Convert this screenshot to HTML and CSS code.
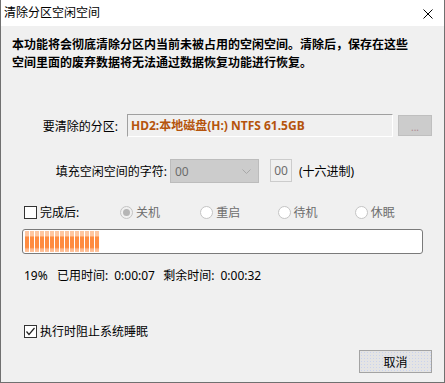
FILE: index.html
```html
<!DOCTYPE html>
<html lang="zh-CN">
<head>
    <meta charset="UTF-8">
    <title>清除分区空闲空间</title>
    <link rel="stylesheet" href="styles.css">
</head>
<body>
    <div class="window">
        <div class="titlebar">
            <span class="title">清除分区空闲空间</span>
            <svg class="close" width="10" height="10" viewBox="0 0 10 10">
                <path d="M0.5 0.5 L9.5 9.5 M9.5 0.5 L0.5 9.5" stroke="#000" stroke-width="1" fill="none"/>
            </svg>
        </div>

        <div class="content">
            <p class="desc">本功能将会彻底清除分区内当前未被占用的空闲空间。清除后，保存在这些<br>空间里面的废弃数据将无法通过数据恢复功能进行恢复。</p>

            <div class="row row-partition">
                <span class="label label-partition">要清除的分区:</span>
                <div class="field">HD2:本地磁盘(H:) NTFS 61.5GB</div>
                <div class="browse-btn">...</div>
            </div>

            <div class="row row-fill">
                <span class="label label-fill">填充空闲空间的字符:</span>
                <div class="dropdown">
                    <span>00</span>
                    <svg width="9" height="5" viewBox="0 0 9 5">
                        <path d="M0.5 0.5 L4.5 4.5 L8.5 0.5" stroke="#a8a8a8" stroke-width="1" fill="none"/>
                    </svg>
                </div>
                <div class="hex-box">00</div>
                <span class="hex-note">(十六进制)</span>
            </div>

            <div class="row row-after">
                <label class="check-item check-after">
                    <span class="checkbox"></span>
                    <span>完成后:</span>
                </label>
                <div class="radio-item radio-first">
                    <span class="radio checked"></span><span>关机</span>
                </div>
                <div class="radio-item">
                    <span class="radio"></span><span>重启</span>
                </div>
                <div class="radio-item">
                    <span class="radio"></span><span>待机</span>
                </div>
                <div class="radio-item">
                    <span class="radio"></span><span>休眠</span>
                </div>
            </div>

            <div class="progress">
                <div class="progress-fill" style="width: 75px;"></div>
            </div>

            <div class="status">
                <span class="percent">19%</span>
                <span>已用时间:</span><span class="time">0:00:07</span>
                <span class="remain">剩余时间:</span><span class="time">0:00:32</span>
            </div>

            <div class="row row-awake">
                <label class="check-item">
                    <span class="checkbox">
                        <svg width="11" height="11" viewBox="0 0 11 11">
                            <path d="M1.5 5.5 L4 8.5 L9.5 2" stroke="#222" stroke-width="1.2" fill="none"/>
                        </svg>
                    </span>
                    <span>执行时阻止系统睡眠</span>
                </label>
            </div>

            <div class="buttons">
                <button class="btn-cancel">取消</button>
            </div>
        </div>
    </div>
</body>
</html>
```

FILE: styles.css
```css
* {
    margin: 0;
    padding: 0;
    box-sizing: border-box;
}

body {
    font-family: "Noto Sans", "Noto Sans CJK SC", sans-serif;
    font-size: 12px;
    color: #000;
    background-color: #f0f0f0;
}

.window {
    width: 445px;
    height: 383px;
    border: 1px solid #707070;
    border-top: none;
    background-color: #f0f0f0;
}

.titlebar {
    height: 26px;
    background-color: #fff;
    display: flex;
    align-items: center;
    justify-content: space-between;
    padding: 0 11px 0 3px;
}

.title {
    line-height: 16px;
}

.close {
    margin-top: 1px;
}

.content {
    padding: 10px 12px 0 11px;
}

.desc {
    font-weight: bold;
    line-height: 18px;
    white-space: nowrap;
}

.row {
    display: flex;
    align-items: center;
}

.label {
    text-align: right;
    white-space: nowrap;
}

/* partition row */
.row-partition {
    margin-top: 42px;
    height: 23px;
}

.label-partition {
    width: 106px;
}

.field {
    margin-left: 9px;
    width: 266px;
    height: 23px;
    border-top: 1px solid #a0a0a0;
    border-left: 1px solid #a0a0a0;
    border-right: 1px solid #fff;
    border-bottom: 1px solid #fff;
    padding-left: 3px;
    line-height: 21px;
    font-weight: bold;
    color: #b5540c;
    white-space: nowrap;
}

.browse-btn {
    margin-left: 5px;
    width: 34px;
    height: 21px;
    background-color: #cccccc;
    border: 1px solid #bfbfbf;
    color: #b08a90;
    font-size: 10px;
    text-align: center;
    line-height: 22px;
}

/* fill row */
.row-fill {
    margin-top: 22px;
    height: 24px;
}

.label-fill {
    width: 155px;
}

.dropdown {
    margin-left: 3px;
    width: 89px;
    height: 24px;
    background-color: #cccccc;
    border: 1px solid #bcbcbc;
    display: flex;
    align-items: center;
    justify-content: space-between;
    padding: 0 7px 0 4px;
    color: #6d6d6d;
}

.hex-box {
    margin-left: 11px;
    width: 22px;
    height: 23px;
    border: 1px solid #cccccc;
    color: #6d6d6d;
    text-align: center;
    line-height: 21px;
    align-self: flex-start;
}

.hex-note {
    margin-left: 7px;
}

/* after-finish row */
.row-after {
    margin-top: 20px;
    height: 18px;
}

.check-item {
    display: flex;
    align-items: center;
    margin-left: 12px;
}

.check-after {
    width: 97px;
}

.checkbox {
    width: 13px;
    height: 13px;
    border: 1px solid #333;
    background-color: #fff;
    margin-right: 3px;
    display: flex;
    align-items: center;
    justify-content: center;
}

.radio-item {
    display: flex;
    align-items: center;
    width: 78px;
    color: #6d6d6d;
}

.radio-first {
    width: 81px;
}

.radio {
    width: 13px;
    height: 13px;
    border-radius: 50%;
    border: 1px solid #c4c4c4;
    background-color: #fff;
    margin-right: 3px;
    position: relative;
}

.radio.checked {
    background-color: #f0f0f0;
}

.radio.checked::after {
    content: "";
    position: absolute;
    left: 2px;
    top: 2px;
    width: 7px;
    height: 7px;
    border-radius: 50%;
    background-color: #b5b5b5;
}

/* progress */
.progress {
    margin: 8px 0 0 10px;
    width: 401px;
    height: 25px;
    border: 1px solid #7a7a7a;
    border-radius: 3px;
    background-color: #fff;
    padding: 1px 2px;
}

.progress-fill {
    height: 21px;
    background-image:
        repeating-linear-gradient(to right, transparent 0 4px, #fff 4px 5px),
        linear-gradient(to bottom, #ffc6a0 0%, #ffc6a0 22%, #ff8b40 30%, #ff8b40 78%, #ffb588 86%, #ffc6a0 100%);
}

/* status */
.status {
    margin: 14px 0 0 12px;
    line-height: 16px;
    display: flex;
    white-space: nowrap;
}

.percent {
    width: 33px;
}

.time {
    margin-left: 6px;
    width: 41px;
}

.remain {
    margin-left: 8px;
}

/* keep awake */
.row-awake {
    margin-top: 38px;
    height: 18px;
}

/* buttons */
.buttons {
    margin-top: 10px;
    display: flex;
    justify-content: flex-end;
}

.btn-cancel {
    width: 73px;
    height: 23px;
    border: 1px solid #a3a3a3;
    background-color: #e4e4e4;
    background-image: radial-gradient(circle, #c9d3ee 0.7px, transparent 0.8px);
    background-size: 3px 3px;
    font-family: "Noto Sans", "Noto Sans CJK SC", sans-serif;
    font-size: 12px;
    color: #000;
}
```
